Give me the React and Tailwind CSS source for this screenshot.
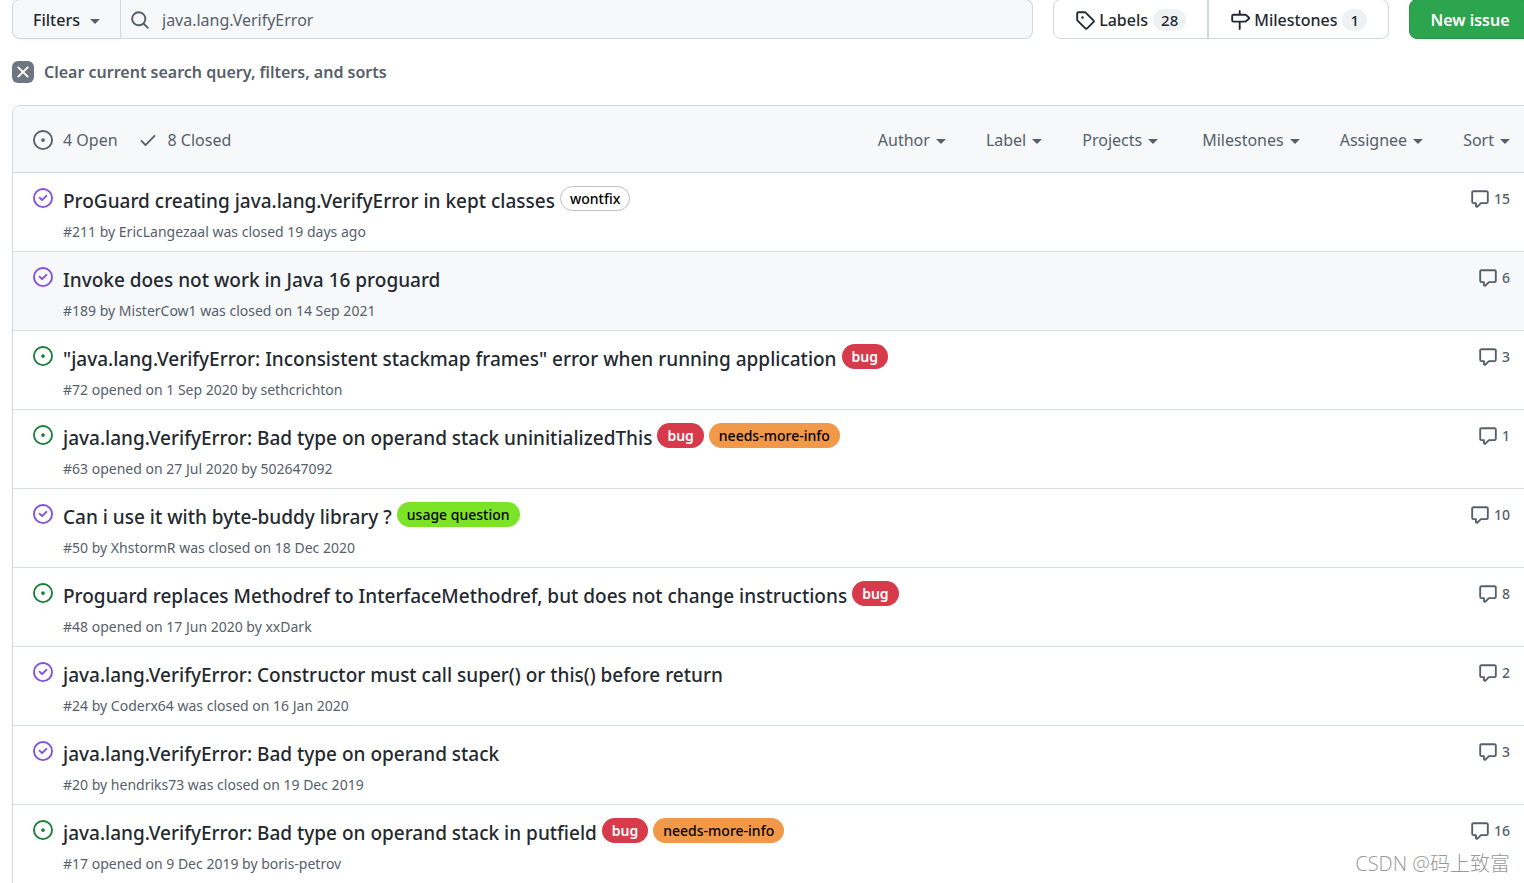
const ICONS = {
  open: "M8 9.5a1.5 1.5 0 100-3 1.5 1.5 0 000 3zM8 0a8 8 0 100 16A8 8 0 008 0zM1.5 8a6.5 6.5 0 1113 0 6.5 6.5 0 01-13 0z",
  closed:
    "M11.28 6.78a.75.75 0 00-1.06-1.06L7.25 8.69 5.78 7.22a.75.75 0 00-1.06 1.06l2 2a.75.75 0 001.06 0l3.5-3.5zM16 8A8 8 0 110 8a8 8 0 0116 0zm-1.5 0a6.5 6.5 0 11-13 0 6.5 6.5 0 0113 0z",
  check:
    "M13.78 4.22a.75.75 0 010 1.06l-7.25 7.25a.75.75 0 01-1.06 0L2.22 9.28a.75.75 0 011.06-1.06L6 10.94l6.72-6.72a.75.75 0 011.06 0z",
  comment:
    "M2.75 2.5a.25.25 0 00-.25.25v7.5c0 .138.112.25.25.25h2a.75.75 0 01.75.75v2.19l2.72-2.72a.75.75 0 01.53-.22h4.5a.25.25 0 00.25-.25v-7.5a.25.25 0 00-.25-.25H2.75zM1 2.75C1 1.784 1.784 1 2.75 1h10.5c.966 0 1.75.784 1.75 1.75v7.5A1.75 1.75 0 0113.25 12H9.06l-2.573 2.573A1.457 1.457 0 014 13.543V12H2.75A1.75 1.75 0 011 10.25v-7.5z",
  tag: "M2.5 7.775V2.75a.25.25 0 01.25-.25h5.025a.25.25 0 01.177.073l6.25 6.25a.25.25 0 010 .354l-5.025 5.025a.25.25 0 01-.354 0l-6.25-6.25a.25.25 0 01-.073-.177zm-1.5 0V2.75C1 1.784 1.784 1 2.75 1h5.025c.464 0 .91.184 1.238.513l6.25 6.25a1.75 1.75 0 010 2.474l-5.026 5.026a1.75 1.75 0 01-2.474 0l-6.25-6.25A1.75 1.75 0 011 7.775zM6 5a1 1 0 100 2 1 1 0 000-2z",
  milestone:
    "M7.75 0a.75.75 0 01.75.75V3h3.634c.414 0 .814.147 1.13.414l2.07 1.75a1.75 1.75 0 010 2.672l-2.07 1.75a1.75 1.75 0 01-1.13.414H8.5v5.25a.75.75 0 11-1.5 0V10H2.75A1.75 1.75 0 011 8.25v-3.5C1 3.784 1.784 3 2.75 3H7V.75A.75.75 0 017.75 0zm0 8.5h4.384a.25.25 0 00.161-.06l2.07-1.75a.25.25 0 000-.38l-2.07-1.75a.25.25 0 00-.161-.06H2.75a.25.25 0 00-.25.25v3.5c0 .138.112.25.25.25h5z",
  search:
    "M11.5 7a4.499 4.499 0 11-8.998 0A4.499 4.499 0 0111.5 7zm-.82 4.74a6 6 0 111.06-1.06l3.04 3.04a.75.75 0 11-1.06 1.06l-3.04-3.04z",
  x: "M3.72 3.72a.75.75 0 011.06 0L8 6.94l3.22-3.22a.75.75 0 111.06 1.06L9.06 8l3.22 3.22a.75.75 0 11-1.06 1.06L8 9.06l-3.22 3.22a.75.75 0 01-1.06-1.06L6.94 8 3.72 4.78a.75.75 0 010-1.06z",
};

const LABEL_STYLES = {
  wontfix: "border border-[#c0c0c0] bg-white px-[9px] font-medium text-black",
  bug: "bg-[#d73a4a] px-2.5 font-semibold text-white",
  "needs-more-info": "bg-[#f29849] px-2.5 font-medium text-black",
  "usage question": "bg-[#7ce427] px-2.5 font-medium text-black",
};

const FILTER_GROUPS = [
  ["Author", "Label", "Projects"],
  ["Milestones", "Assignee", "Sort"],
];

const ISSUES = [
  {
    id: 211,
    title: "ProGuard creating java.lang.VerifyError in kept classes",
    meta: "by EricLangezaal was closed 19 days ago",
    labels: ["wontfix"],
    comments: 15,
  },
  {
    id: 189,
    title: "Invoke does not work in Java 16 proguard",
    meta: "by MisterCow1 was closed on 14 Sep 2021",
    labels: [],
    comments: 6,
    active: true,
  },
  {
    id: 72,
    title:
      '"java.lang.VerifyError: Inconsistent stackmap frames" error when running application',
    meta: "opened on 1 Sep 2020 by sethcrichton",
    labels: ["bug"],
    comments: 3,
    open: true,
  },
  {
    id: 63,
    title: "java.lang.VerifyError: Bad type on operand stack uninitializedThis",
    meta: "opened on 27 Jul 2020 by 502647092",
    labels: ["bug", "needs-more-info"],
    comments: 1,
    open: true,
  },
  {
    id: 50,
    title: "Can i use it with byte-buddy library ?",
    meta: "by XhstormR was closed on 18 Dec 2020",
    labels: ["usage question"],
    comments: 10,
  },
  {
    id: 48,
    title:
      "Proguard replaces Methodref to InterfaceMethodref, but does not change instructions",
    meta: "opened on 17 Jun 2020 by xxDark",
    labels: ["bug"],
    comments: 8,
    open: true,
  },
  {
    id: 24,
    title:
      "java.lang.VerifyError: Constructor must call super() or this() before return",
    meta: "by Coderx64 was closed on 16 Jan 2020",
    labels: [],
    comments: 2,
  },
  {
    id: 20,
    title: "java.lang.VerifyError: Bad type on operand stack",
    meta: "by hendriks73 was closed on 19 Dec 2019",
    labels: [],
    comments: 3,
  },
  {
    id: 17,
    title: "java.lang.VerifyError: Bad type on operand stack in putfield",
    meta: "opened on 9 Dec 2019 by boris-petrov",
    labels: ["bug", "needs-more-info"],
    comments: 16,
    open: true,
  },
];

function Icon({ name }) {
  return (
    <svg
      viewBox="0 0 16 16"
      fill="currentColor"
      fillRule="evenodd"
      aria-hidden="true"
      className="size-5 shrink-0"
    >
      <path d={ICONS[name]} />
    </svg>
  );
}

function Caret() {
  return (
    <svg
      viewBox="0 0 10 5"
      fill="currentColor"
      aria-hidden="true"
      className="mt-0.5 h-[5px] w-[10px] shrink-0"
    >
      <path d="M0 0h10L5 5z" />
    </svg>
  );
}

function Counter({ children }) {
  return (
    <span className="ml-[5px] rounded-full bg-[#eff1f3] px-2 text-[15px] leading-[22px] font-medium">
      {children}
    </span>
  );
}

function Toolbar() {
  return (
    <div className="-mt-px flex h-10 gap-5 text-base font-medium">
      <form
        className="flex min-w-0 flex-1"
        onSubmit={(e) => e.preventDefault()}
      >
        <button
          type="button"
          className="flex w-[109px] shrink-0 items-center justify-center gap-2.5 rounded-l-lg border border-[#d0d7de] bg-[#f6f8fa] pt-0.5 shadow-xs"
        >
          Filters
          <span className="text-[#57606a]">
            <Caret />
          </span>
        </button>
        <label className="flex min-w-0 flex-1 items-center rounded-r-lg border border-l-0 border-[#d0d7de] bg-[#f6f8fa] pt-0.5 pl-[9px] text-[#57606a]">
          <Icon name="search" />
          <input
            type="text"
            aria-label="Search all issues"
            defaultValue="java.lang.VerifyError"
            className="ml-3 min-w-0 flex-1 bg-transparent font-normal outline-none"
          />
        </label>
      </form>
      <nav className="flex shrink-0">
        <a
          href="#labels"
          className="flex items-center rounded-l-lg border border-[#d0d7de] px-[21px] pt-0.5"
        >
          <Icon name="tag" />
          <span className="ml-1">Labels</span>
          <Counter>28</Counter>
        </a>
        <a
          href="#milestones"
          className="flex items-center rounded-r-lg border border-[#d0d7de] px-[21px] pt-0.5"
        >
          <Icon name="milestone" />
          <span className="ml-1">Milestones</span>
          <Counter>1</Counter>
        </a>
      </nav>
      <a
        href="#new"
        className="flex w-[122px] shrink-0 items-center justify-center rounded-lg border border-[#2a9147] bg-[#2da44e] pt-0.5 font-semibold text-white shadow-xs"
      >
        New issue
      </a>
    </div>
  );
}

function IssueRow({ issue }) {
  return (
    <li
      className={`flex border-b border-[#d8dee4] pt-3 pr-5 pb-2 pl-5 ${issue.active ? "bg-[#f6f8fa]" : ""}`}
    >
      <span
        className={`mt-[3px] ${issue.open ? "text-[#1a7f37]" : "text-[#8250df]"}`}
      >
        <Icon name={issue.open ? "open" : "closed"} />
      </span>
      <div className="ml-2.5 min-w-0 flex-1">
        <div className="flex items-start gap-[5px]">
          <a
            href={`#issue-${issue.id}`}
            className="text-[19px] leading-8 font-medium"
          >
            {issue.title}
          </a>
          {issue.labels.map((label) => (
            <a
              key={label}
              href={`#label-${label}`}
              className={`mt-px flex h-[25px] items-center rounded-full text-sm ${LABEL_STYLES[label]}`}
            >
              {label}
            </a>
          ))}
        </div>
        <p className="mt-1 text-sm leading-[22px] text-[#57606a]">
          #{issue.id} {issue.meta}
        </p>
      </div>
      <a
        href={`#comments-${issue.id}`}
        className="mt-1 flex h-5 items-center gap-1 text-sm font-medium text-[#57606a]"
      >
        <Icon name="comment" />
        {issue.comments}
      </a>
    </li>
  );
}

export default function App() {
  return (
    <div className="relative h-screen overflow-hidden bg-white font-['Noto_Sans','Noto_Sans_CJK_SC',sans-serif] text-[#24292f]">
      <main className="-mr-[7px] ml-3">
        <Toolbar />

        <a
          href="#clear"
          className="mt-[21px] flex h-6 items-center gap-2.5 font-semibold text-[#57606a]"
        >
          <span className="flex size-[22px] items-center justify-center rounded-md bg-[#6e7781] text-white">
            <Icon name="x" />
          </span>
          Clear current search query, filters, and sorts
        </a>

        <section className="mt-[21px] rounded-t-lg border border-[#d0d7de]">
          <header className="flex h-[67px] items-center justify-between rounded-t-lg border-b border-[#d0d7de] bg-[#f6f8fa] px-5 pt-0.5 text-base text-[#57606a]">
            <div className="flex items-center gap-5">
              <a href="#open" className="flex items-center gap-2.5">
                <Icon name="open" />4 Open
              </a>
              <a href="#closed" className="flex items-center gap-2.5">
                <Icon name="check" />8 Closed
              </a>
            </div>
            <div className="flex items-center gap-11">
              {FILTER_GROUPS.map((group) => (
                <div key={group[0]} className="flex items-center gap-10">
                  {group.map((filter) => (
                    <button
                      key={filter}
                      type="button"
                      className="flex items-center gap-1.5"
                    >
                      {filter}
                      <Caret />
                    </button>
                  ))}
                </div>
              ))}
            </div>
          </header>
          <ul>
            {ISSUES.map((issue) => (
              <IssueRow key={issue.id} issue={issue} />
            ))}
          </ul>
        </section>
      </main>
      <p className="absolute right-3.5 bottom-1 font-['Open_Sans','Noto_Sans_CJK_SC',sans-serif] text-xl leading-[30px] font-light text-[#999999]">
        CSDN @码上致富
      </p>
    </div>
  );
}
